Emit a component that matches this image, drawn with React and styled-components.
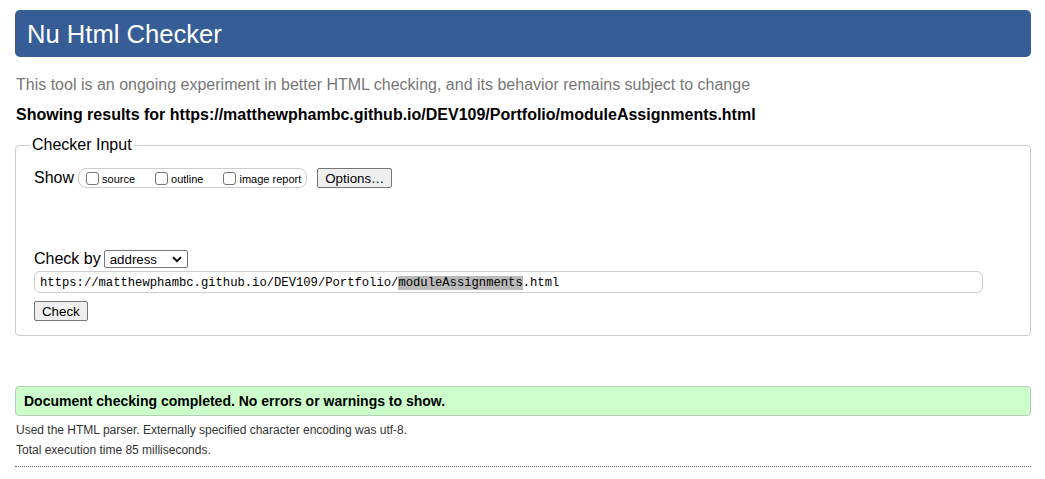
import React from "react";
import styled, { createGlobalStyle } from "styled-components";

const Global = createGlobalStyle`
  html, body { margin: 0; padding: 0; background: #fff; }
  body { font-family: "Liberation Sans", Arial, sans-serif; color: #000; }
`;

const Page = styled.div`
  padding: 10px 14px 0 15px;
  display: flex;
  flex-direction: column;
`;

const Header = styled.header`
  height: 47px;
  background: #365d95;
  border-radius: 5px;
  display: flex;
  align-items: center;
  padding-left: 12px;
`;

const Title = styled.h1`
  margin: 0;
  font-size: 25.6px;
  font-weight: normal;
  color: #fff;
  line-height: 30px;
`;

const Intro = styled.p`
  margin: 19px 0 0 1px;
  font-size: 16px;
  line-height: 18px;
  color: #777;
`;

const Results = styled.p`
  margin: 12px 0 0 1px;
  font-size: 16px;
  line-height: 18px;
  font-weight: bold;
`;

const Fieldset = styled.fieldset`
  margin: 12px 0 0;
  padding: 0 18px 14px 18px;
  border: 1px solid #ccc;
  border-radius: 4px;
  min-width: 0;
`;

const Legend = styled.legend`
  margin-left: -4px;
  padding: 0 2px;
  font-size: 16px;
  line-height: 18px;
`;

const Row = styled.div`
  display: flex;
  align-items: center;
  gap: ${(p) => p.$gap || 0}px;
  margin-top: ${(p) => p.$mt || 0}px;
`;

const Label = styled.span`
  font-size: 16px;
  line-height: 18px;
`;

const CheckGroup = styled.div`
  display: flex;
  align-items: center;
  gap: 20px;
  height: 18px;
  padding: 0 5px 0 7px;
  border: 1px solid #ccc;
  border-radius: 8px;
`;

const CheckItem = styled.label`
  display: flex;
  align-items: center;
  gap: 3px;
  font-size: 11px;
  line-height: 13px;
`;

const CheckText = styled.span`
  padding-top: 3px;
`;

const Box = styled.input.attrs({ type: "checkbox" })`
  appearance: none;
  margin: 0;
  width: 13px;
  height: 13px;
  border: 1px solid #767676;
  border-radius: 3px;
  background: #fff;
  box-sizing: border-box;
`;

const Button = styled.button`
  height: 20px;
  padding: 0 7px;
  margin: 0 0 0 ${(p) => p.$ml || 0}px;
  font-family: "Liberation Sans", Arial, sans-serif;
  font-size: 13.3px;
  color: #000;
  background: #efefef;
  border: 1px solid #767676;
  border-radius: 2px;
`;

const SelectWrap = styled.div`
  position: relative;
  display: flex;
`;

const Select = styled.select`
  appearance: none;
  width: 84px;
  height: 18px;
  margin: 0;
  padding: 0 0 0 5px;
  font-family: "Liberation Sans", Arial, sans-serif;
  font-size: 13.3px;
  color: #000;
  background: #fff;
  border: 1px solid #767676;
  border-radius: 2px;
`;

const Chevron = styled.svg`
  position: absolute;
  right: 6px;
  top: 6px;
  pointer-events: none;
`;

const UrlBox = styled.div`
  width: 949px;
  height: 22px;
  box-sizing: border-box;
  margin-top: 3px;
  padding: 1px 5px 0;
  display: flex;
  align-items: center;
  border: 1px solid #ccc;
  border-radius: 6px;
  font-family: "Liberation Mono", "DejaVu Sans Mono", monospace;
  font-size: 12.2px;
  white-space: pre;
`;

const Mark = styled.span`
  background: #b9b9b9;
`;

const Success = styled.div`
  margin-top: 50px;
  height: 30px;
  box-sizing: border-box;
  padding-left: 8px;
  display: flex;
  align-items: center;
  background: #ccffcc;
  border: 1px solid #b3cfb3;
  border-radius: 4px;
  font-size: 14px;
  font-weight: bold;
`;

const Details = styled.div`
  margin-top: 4px;
  padding-left: 1px;
  font-size: 12px;
  line-height: 20px;
  color: #333;
`;

const Rule = styled.hr`
  margin: 6px 0 0;
  border: none;
  border-top: 1px dotted #666;
`;

export default function App() {
  return (
    <>
      <Global />
      <Page>
        <Header>
          <Title>Nu Html Checker</Title>
        </Header>
        <Intro>
          This tool is an ongoing experiment in better HTML checking, and its behavior remains subject to change
        </Intro>
        <Results>
          Showing results for https://matthewphambc.github.io/DEV109/Portfolio/moduleAssignments.html
        </Results>
        <Fieldset>
          <Legend>Checker Input</Legend>
          <Row $mt={14} $gap={4}>
            <Label>Show</Label>
            <CheckGroup>
              <CheckItem>
                <Box />
                <CheckText>source</CheckText>
              </CheckItem>
              <CheckItem>
                <Box />
                <CheckText>outline</CheckText>
              </CheckItem>
              <CheckItem>
                <Box />
                <CheckText>image report</CheckText>
              </CheckItem>
            </CheckGroup>
            <Button $ml={6}>Options…</Button>
          </Row>
          <Row $mt={62} $gap={3}>
            <Label>Check by</Label>
            <SelectWrap>
              <Select defaultValue="address">
                <option value="address">address</option>
                <option value="file">file upload</option>
                <option value="text">text input</option>
              </Select>
              <Chevron width="10" height="7" viewBox="0 0 10 7">
                <path d="M1 1.2 L5 5.2 L9 1.2" fill="none" stroke="#000" strokeWidth="1.9" />
              </Chevron>
            </SelectWrap>
          </Row>
          <UrlBox>
            https://matthewphambc.github.io/DEV109/Portfolio/<Mark>moduleAssignments</Mark>.html
          </UrlBox>
          <Row $mt={8}>
            <Button>Check</Button>
          </Row>
        </Fieldset>
        <Success>Document checking completed. No errors or warnings to show.</Success>
        <Details>
          <div>Used the HTML parser. Externally specified character encoding was utf-8.</div>
          <div>Total execution time 85 milliseconds.</div>
        </Details>
        <Rule />
      </Page>
    </>
  );
}
